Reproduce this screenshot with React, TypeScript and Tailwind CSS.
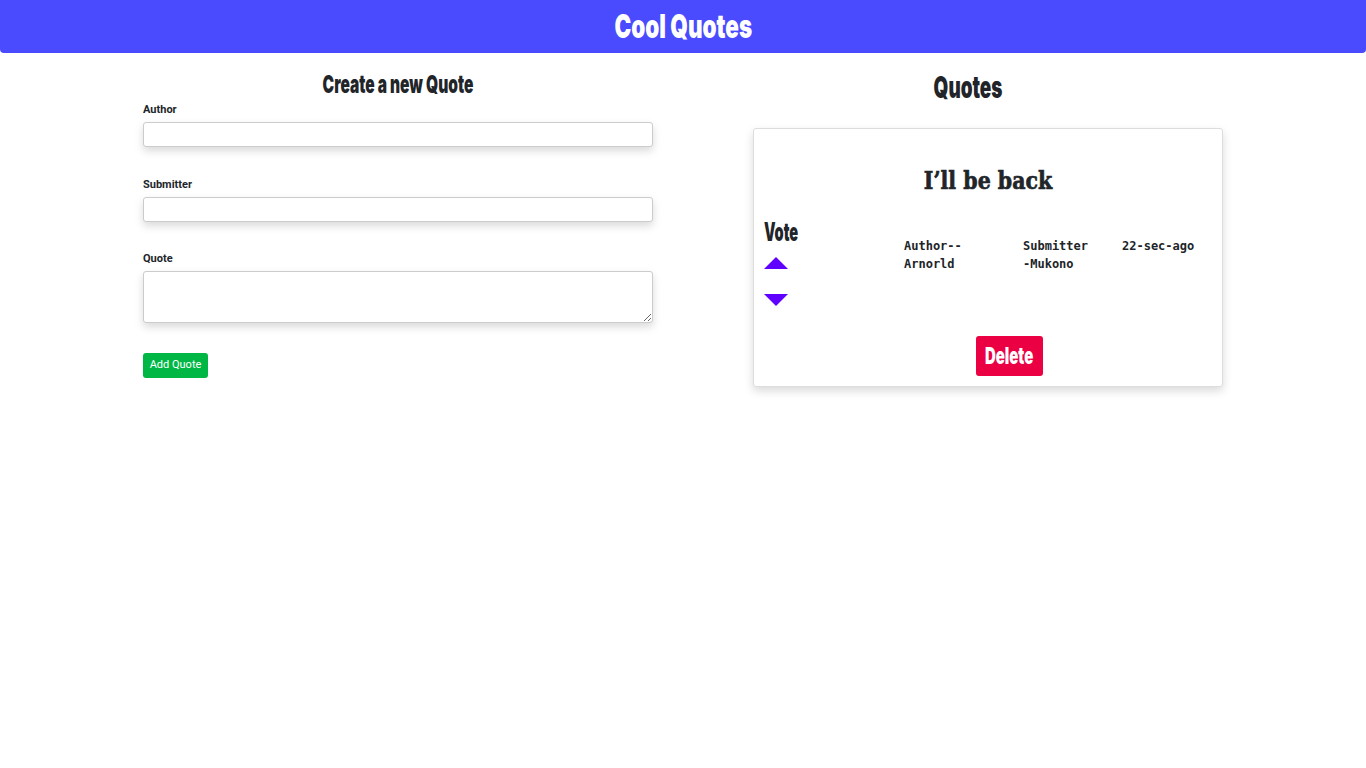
const heavy = "font-['Inter',sans-serif] font-black";

function Field({ label, area, gap = "mb-[29px]" }: { label: string; area?: boolean; gap?: string }) {
  return (
    <div className={gap}>
      <label className="block text-[11px] font-bold text-[#212529] font-['Roboto',sans-serif] mb-[4px] leading-[16px]">
        {label}
      </label>
      {area ? (
        <textarea className="block w-full h-[52px] border border-[#ccc] rounded-[3px] shadow-[0_4px_8px_rgba(0,0,0,0.15)] bg-white" />
      ) : (
        <input className="block w-full h-[25px] border border-[#ccc] rounded-[3px] shadow-[0_4px_8px_rgba(0,0,0,0.15)] bg-white" />
      )}
    </div>
  );
}

export default function App() {
  return (
    <div className="min-h-screen bg-white text-[#212529]">
      <header className="h-[53px] bg-[#4a4aff] rounded-b-[4px] flex items-center justify-center">
        <h1 className={`${heavy} text-white text-[33px] leading-none scale-x-[0.68]`}>
          Cool Quotes
        </h1>
      </header>

      <main className="flex pl-[143px] pt-[20px]">
        <section className="w-[510px]">
          <h2 className={`${heavy} -mt-[2px] text-center text-[25px] leading-[26px] mb-[5px] scale-x-[0.62]`}>
            Create a new Quote
          </h2>
          <Field label="Author" gap="mb-[30px]" />
          <Field label="Submitter" />
          <Field label="Quote" area gap="mb-0" />
          <button className="block mt-[30px] h-[25px] w-[65px] bg-[#00b746] text-white text-[11px] rounded-[3px] font-['Roboto',sans-serif]">
            Add Quote
          </button>
        </section>

        <section className="w-[510px] ml-[60px] -mt-[3px]">
          <h2 className={`${heavy} text-center text-[30px] leading-[34px] mb-[24px] scale-x-[0.63]`}>
            Quotes
          </h2>
          <div className="ml-[40px] w-[470px] h-[259px] border border-[#ddd] rounded-[3px] bg-white shadow-[0_4px_10px_rgba(0,0,0,0.15)] px-[10px] pt-[37px]">
            <p className="text-center font-['DejaVu_Serif',serif] font-bold text-[25px] leading-[30px] scale-x-[0.82] [-webkit-text-stroke:0.7px_#212529]">
              I’ll be back
            </p>
            <div className="flex mt-[23px]">
              <div className="w-[140px]">
                <p className={`${heavy} text-[26px] leading-[26px] origin-left scale-x-[0.56]`}>Vote</p>
                <div className="mt-[12px] w-0 h-0 border-l-[12px] border-r-[12px] border-b-[12px] border-l-transparent border-r-transparent border-b-[#6000ff]" />
                <div className="mt-[25px] w-0 h-0 border-l-[12px] border-r-[12px] border-t-[12px] border-l-transparent border-r-transparent border-t-[#6000ff]" />
              </div>
              <div className="grid grid-cols-[119px_99px_auto] pt-[18px] font-['DejaVu_Sans_Mono',monospace] text-[12px] leading-[18px] font-semibold self-start">
                <span className="pr-[20px]">Author-- Arnorld</span>
                <span className="pr-[20px]">Submitter -Mukono</span>
                <span>22-sec-ago</span>
              </div>
            </div>
            <div className="flex justify-center mt-[30px]">
              <button className="ml-[43px] h-[40px] w-[67px] bg-[#ea0043] text-white rounded-[3px] flex items-center justify-center">
                <span className={`${heavy} text-[23px] leading-none scale-x-[0.65]`}>Delete</span>
              </button>
            </div>
          </div>
        </section>
      </main>
    </div>
  );
}
